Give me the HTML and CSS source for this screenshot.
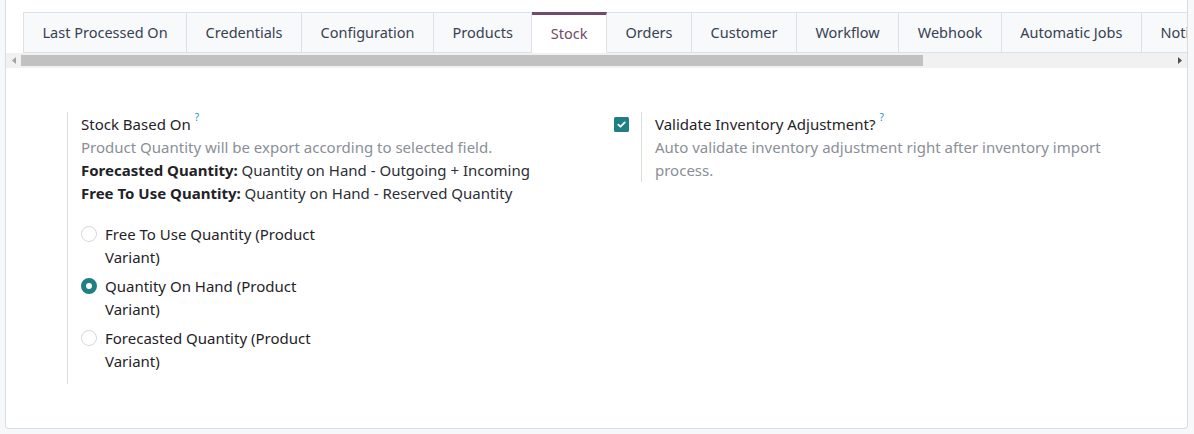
FILE: index.html
```html
<!DOCTYPE html>
<html>
<head>
<meta charset="utf-8">
<link rel="stylesheet" href="styles.css">
</head>
<body>
<div class="sheet">
  <div class="tabs-clip">
    <ul class="tabs">
      <li class="tab">Last Processed On</li>
      <li class="tab">Credentials</li>
      <li class="tab">Configuration</li>
      <li class="tab">Products</li>
      <li class="tab active">Stock</li>
      <li class="tab">Orders</li>
      <li class="tab">Customer</li>
      <li class="tab">Workflow</li>
      <li class="tab">Webhook</li>
      <li class="tab">Automatic Jobs</li>
      <li class="tab">Notifications</li>
    </ul>
  </div>
  <div class="hscroll">
    <div class="arrow arrow-left"><svg width="4" height="7" viewBox="0 0 4 7"><path d="M4 0 L0 3.5 L4 7 Z" fill="#a3a3a3"/></svg></div>
    <div class="track"><div class="thumb"></div></div>
    <div class="arrow arrow-right"><svg width="4" height="7" viewBox="0 0 4 7"><path d="M0 0 L4 3.5 L0 7 Z" fill="#505050"/></svg></div>
  </div>
  <div class="settings">
    <div class="setting">
      <div class="left-pane"></div>
      <div class="right-pane">
        <div class="label">Stock Based On<sup class="help">?</sup></div>
        <div class="muted">Product Quantity will be export according to selected field.</div>
        <div class="line"><b>Forecasted Quantity:</b> Quantity on Hand - Outgoing + Incoming</div>
        <div class="line"><b>Free To Use Quantity:</b> Quantity on Hand - Reserved Quantity</div>
        <div class="radios">
          <div class="radio"><span class="dot"></span><span class="rlabel">Free To Use Quantity (Product Variant)</span></div>
          <div class="radio"><span class="dot checked"></span><span class="rlabel">Quantity On Hand (Product Variant)</span></div>
          <div class="radio"><span class="dot"></span><span class="rlabel">Forecasted Quantity (Product Variant)</span></div>
        </div>
      </div>
    </div>
    <div class="setting">
      <div class="left-pane">
        <svg class="checkbox" width="15" height="15" viewBox="0 0 15 15"><rect x="0" y="0" width="15" height="15" rx="1.5" fill="#1f7f84"/><path d="M4.3 7.6 L6.5 9.7 L10.8 5.4" fill="none" stroke="#fff" stroke-width="1.8" stroke-linecap="round" stroke-linejoin="round"/></svg>
      </div>
      <div class="right-pane short">
        <div class="label">Validate Inventory Adjustment?<sup class="help">?</sup></div>
        <div class="muted">Auto validate inventory adjustment right after inventory import process.</div>
      </div>
    </div>
  </div>
</div>
</body>
</html>
```
FILE: styles.css
```css
* { box-sizing: border-box; }
html, body { margin: 0; padding: 0; }
body {
  background: #f7f8fa;
  font-family: "Noto Sans", Roboto, sans-serif;
  font-size: 15px;
  color: #2b2f36;
  width: 1194px;
  height: 434px;
  overflow: hidden;
}
.sheet {
  margin: 0 6px 0 5px;
  height: 429px;
  background: #fff;
  border: 1px solid #d9dce0;
  border-top: none;
  border-radius: 0 0 4px 4px;
  padding-top: 12px;
}
.tabs-clip {
  overflow: hidden;
  padding-left: 17px;
}
.tabs {
  display: flex;
  list-style: none;
  margin: 0;
  padding: 0;
  white-space: nowrap;
  font-size: 14.5px;
}
.tab {
  flex: none;
  height: 41px;
  line-height: 38px;
  padding: 0 18.5px;
  background: #f8f9fa;
  border: 1px solid #dee2e6;
  border-left: none;
  color: #374151;
}
.tab:first-child { border-left: 1px solid #dee2e6; }
.tab.active {
  background: #fff;
  border-top: 3px solid #714b67;
  border-bottom-color: #fff;
  line-height: 36px;
  color: #714b67;
}
.hscroll {
  display: flex;
  height: 15px;
  background: #f1f1f1;
}
.arrow {
  width: 15px;
  display: flex;
  align-items: center;
  justify-content: center;
}
.track {
  flex: 1;
  display: flex;
  align-items: center;
  padding: 0 1px;
}
.thumb {
  width: 902px;
  height: 11px;
  background: #c1c1c1;
  margin-left: -1px;
}
.settings {
  display: grid;
  grid-template-columns: 574px 510px;
  align-items: start;
  padding: 44px 0 0 34px;
  line-height: 23px;
}
.setting { display: flex; }
.left-pane {
  width: 27px;
  flex: none;
  padding-top: 5px;
}
.checkbox { display: block; }
.right-pane {
  border-left: 1px solid #d9dce0;
  padding: 1px 0 0 13px;
}
.label { color: #1f2328; }
.help {
  color: #1a93c4;
  font-size: 10px;
  margin-left: 4px;
  vertical-align: top;
  line-height: 12px;
  position: relative;
  top: -2px;
}
.muted { color: #8a8f97; }
.line { color: #2b2f36; }
.line b { color: #1f2328; font-weight: 700; }
.radios { margin: 18px 0 11px; width: 250px; }
.radio {
  display: flex;
  gap: 8px;
  margin-bottom: 6px;
}
.radio:last-child { margin-bottom: 0; }
.dot {
  flex: none;
  width: 16px;
  height: 16px;
  margin-top: 3px;
  border-radius: 50%;
  border: 1px solid #d5d8dc;
  background: #fff;
}
.dot.checked {
  border: 5px solid #1f7f84;
  background: #fff;
}
.rlabel { color: #1f2328; }
```
